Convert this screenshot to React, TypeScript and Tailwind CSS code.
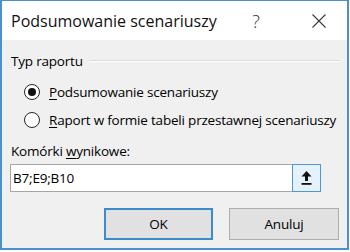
import React from 'react';

const Radio = ({ checked, children }: { checked?: boolean; children: React.ReactNode }) => (
  <div className="h-[28px] flex items-center ml-[13px] gap-[9px]">
    <span className="w-[16px] h-[16px] rounded-full border-[1.5px] border-[#262626] bg-white flex items-center justify-center shrink-0">
      {checked && <span className="w-[8px] h-[8px] rounded-full bg-[#111]" />}
    </span>
    <span className="text-[13.5px] leading-[20px] tracking-[-0.2px]">{children}</span>
  </div>
);

export default function App() {
  return (
    <div className="w-[350px] h-[252px] bg-white">
      <div className="w-[349px] h-[250px] flex flex-col border-2 border-t border-[#4a90cf] bg-[#f0f0f0] text-black font-['Open_Sans',sans-serif]">
        {/* title bar */}
        <div className="h-[39px] shrink-0 bg-white flex items-center pl-[9px]">
          <span className="flex-1 text-[16px] leading-[20px] text-[#111]">Podsumowanie scenariuszy</span>
          <span className="w-[20px] text-center text-[18px] leading-[20px] font-light text-[#333]">?</span>
          <span className="w-[56px] ml-[25px] flex justify-center">
            <svg width="14" height="14" viewBox="0 0 14 14">
              <path d="M0.5 0.5L13.5 13.5M13.5 0.5L0.5 13.5" stroke="#3a3a3a" strokeWidth="1.1" />
            </svg>
          </span>
        </div>

        {/* body */}
        <div className="flex-1 flex flex-col pl-[9px] pr-[8px] text-[13.5px] tracking-[-0.2px]">
          <div className="mt-[11px] h-[20px] flex items-center gap-[6px]">
            <span className="leading-[20px]">Typ raportu</span>
            <div className="flex-1 mr-[-1px] h-[2px] border-t border-[#d5dbe0] border-b border-b-white" />
          </div>

          <div className="mt-[7px]">
            <Radio checked>
              <span className="underline underline-offset-2">P</span>odsumowanie scenariuszy
            </Radio>
            <Radio>
              <span className="underline underline-offset-2">R</span>aport w formie tabeli przestawnej scenariuszy
            </Radio>
          </div>

          <div className="mt-[7px] h-[20px] leading-[20px]">
            Komórki <span className="underline underline-offset-2">w</span>ynikowe:
          </div>

          <div className="mt-[3px] ml-[-1px] w-[311px] h-[28px] flex">
            <div className="flex-1 h-full bg-white border border-[#a6a6a6] border-r-0 flex items-center pl-[2px]">
              B7;E9;B10
            </div>
            <div className="w-[29px] h-full border border-[#4f98d6] bg-[#e5f1fb] flex items-center justify-center">
              <svg width="11" height="16" viewBox="0 0 11 16">
                <path d="M5.5 1L10.5 6.5H7V11H4V6.5H0.5Z" fill="#111" />
                <rect x="0.5" y="13" width="10" height="1.8" fill="#111" />
              </svg>
            </div>
          </div>

          <div className="mt-[16px] flex justify-end gap-[16px]">
            <button className="w-[109px] h-[32px] bg-[#e1e1e1] border-2 border-[#3d8ad1]">OK</button>
            <button className="w-[110px] h-[32px] bg-[#e1e1e1] border border-[#adadad]">Anuluj</button>
          </div>
        </div>
      </div>
    </div>
  );
}
